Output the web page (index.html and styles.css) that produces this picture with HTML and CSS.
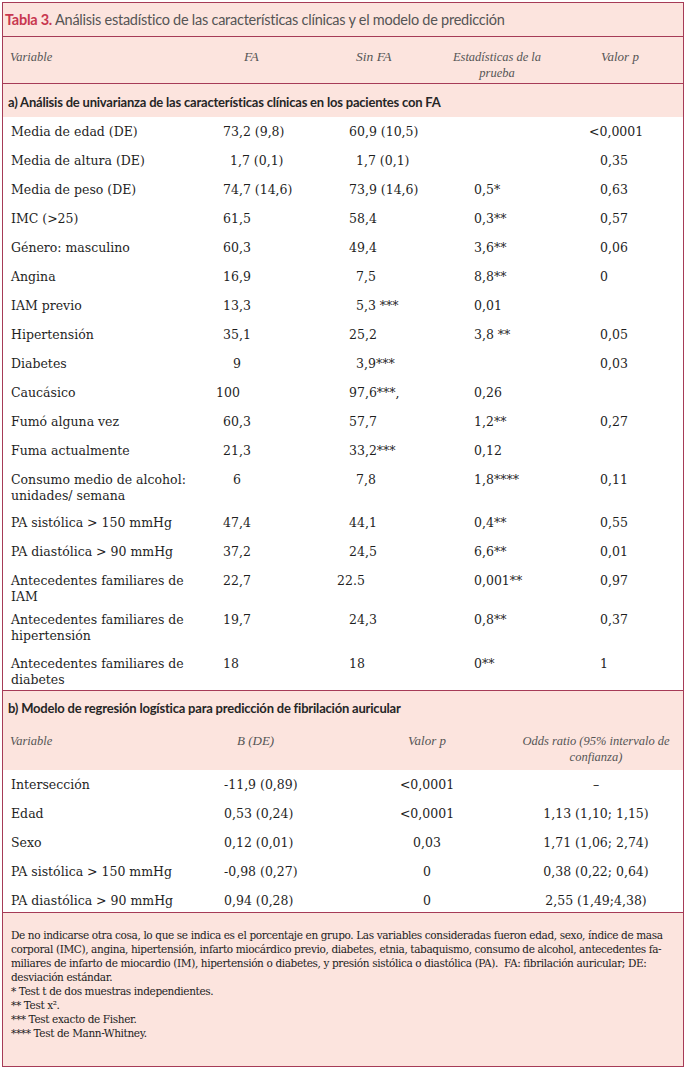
FILE: index.html
```html
<!DOCTYPE html>
<html lang="es">
<head>
<meta charset="utf-8">
<title>Tabla 3</title>
<link rel="stylesheet" href="styles.css">
</head>
<body>
<div class="frame">
  <div class="title"><b>Tabla 3.</b>&nbsp;Análisis estadístico de las características clínicas y el modelo de predicción</div>

  <div class="head-a">
    <div class="c1">Variable</div>
    <div class="c2">FA</div>
    <div class="c3">Sin FA</div>
    <div class="c4">Estadísticas de la prueba</div>
    <div class="c5">Valor p</div>
  </div>
  <div class="sec-title">a) Análisis de univarianza de las características clínicas en los pacientes con FA</div>
  <div class="body-a">
    <div class="row"><div class="v">Media de edad (DE)</div><div>73,2 (9,8)</div><div>60,9 (10,5)</div><div></div><div class="m11">&lt;0,0001</div></div>
    <div class="row"><div class="v">Media de altura (DE)</div><div class="p7">1,7 (0,1)</div><div class="p7">1,7 (0,1)</div><div></div><div>0,35</div></div>
    <div class="row"><div class="v">Media de peso (DE)</div><div>74,7 (14,6)</div><div>73,9 (14,6)</div><div>0,5*</div><div>0,63</div></div>
    <div class="row"><div class="v">IMC (&gt;25)</div><div>61,5</div><div>58,4</div><div>0,3**</div><div>0,57</div></div>
    <div class="row"><div class="v">Género: masculino</div><div>60,3</div><div>49,4</div><div>3,6**</div><div>0,06</div></div>
    <div class="row"><div class="v">Angina</div><div>16,9</div><div class="p7">7,5</div><div>8,8**</div><div>0</div></div>
    <div class="row"><div class="v">IAM previo</div><div>13,3</div><div class="p7">5,3 ***</div><div>0,01</div><div></div></div>
    <div class="row"><div class="v">Hipertensión</div><div>35,1</div><div>25,2</div><div>3,8 **</div><div>0,05</div></div>
    <div class="row"><div class="v">Diabetes</div><div class="p10">9</div><div class="p7">3,9***</div><div></div><div>0,03</div></div>
    <div class="row"><div class="v">Caucásico</div><div class="m7">100</div><div>97,6***,</div><div>0,26</div><div></div></div>
    <div class="row"><div class="v">Fumó alguna vez</div><div>60,3</div><div>57,7</div><div>1,2**</div><div>0,27</div></div>
    <div class="row"><div class="v">Fuma actualmente</div><div>21,3</div><div>33,2***</div><div>0,12</div><div></div></div>
    <div class="row h43"><div class="v">Consumo medio de alcohol:<br>unidades/ semana</div><div class="p10">6</div><div class="p7">7,8</div><div>1,8****</div><div>0,11</div></div>
    <div class="row"><div class="v">PA sistólica &gt; 150 mmHg</div><div>47,4</div><div>44,1</div><div>0,4**</div><div>0,55</div></div>
    <div class="row"><div class="v">PA diastólica &gt; 90 mmHg</div><div>37,2</div><div>24,5</div><div>6,6**</div><div>0,01</div></div>
    <div class="row h39"><div class="v">Antecedentes familiares de<br>IAM</div><div>22,7</div><div class="m12">22.5</div><div>0,001**</div><div>0,97</div></div>
    <div class="row h44"><div class="v">Antecedentes familiares de<br>hipertensión</div><div>19,7</div><div>24,3</div><div>0,8**</div><div>0,37</div></div>
    <div class="row h41"><div class="v">Antecedentes familiares de<br>diabetes</div><div>18</div><div>18</div><div>0**</div><div>1</div></div>
  </div>

  <div class="sec-title sec-b">b) Modelo de regresión logística para predicción de fibrilación auricular</div>
  <div class="head-b">
    <div class="c1">Variable</div>
    <div class="c2">B (DE)</div>
    <div class="c3">Valor p</div>
    <div class="c4">Odds ratio (95% intervalo de confianza)</div>
  </div>
  <div class="body-b">
    <div class="row"><div class="v">Intersección</div><div>-11,9 (0,89)</div><div class="ctr">&lt;0,0001</div><div class="ctr">–</div></div>
    <div class="row"><div class="v">Edad</div><div>0,53 (0,24)</div><div class="ctr">&lt;0,0001</div><div class="ctr">1,13 (1,10; 1,15)</div></div>
    <div class="row"><div class="v">Sexo</div><div>0,12 (0,01)</div><div class="ctr">0,03</div><div class="ctr">1,71 (1,06; 2,74)</div></div>
    <div class="row"><div class="v">PA sistólica &gt; 150 mmHg</div><div>-0,98 (0,27)</div><div class="ctr">0</div><div class="ctr">0,38 (0,22; 0,64)</div></div>
    <div class="row last"><div class="v">PA diastólica &gt; 90 mmHg</div><div>0,94 (0,28)</div><div class="ctr">0</div><div class="ctr">2,55 (1,49;4,38)</div></div>
  </div>

  <div class="notes">
    <p>De no indicarse otra cosa, lo que se indica es el porcentaje en grupo. Las variables consideradas fueron edad, sexo, índice de masa</p>
    <p>corporal (IMC), angina, hipertensión, infarto miocárdico previo, diabetes, etnia, tabaquismo, consumo de alcohol, antecedentes fa-</p>
    <p>miliares de infarto de miocardio (IM), hipertensión o diabetes, y presión sistólica o diastólica (PA).&nbsp; FA: fibrilación auricular; DE:</p>
    <p>desviación estándar.</p>
    <p>* Test t de dos muestras independientes.</p>
    <p>** Test x².</p>
    <p>*** Test exacto de Fisher.</p>
    <p>**** Test de Mann-Whitney.</p>
  </div>
</div>
</body>
</html>
```

FILE: styles.css
```css
* { box-sizing: border-box; }

body {
  margin: 0;
  background: #ffffff;
  font-family: "DejaVu Serif", serif;
  color: #1f1f1f;
}

.frame {
  margin: 2px 0 0 2px;
  width: 682px;
  height: 1065px;
  border: 1px solid #a63b57;
  background: #fce4de;
  display: flex;
  flex-direction: column;
}

.title {
  height: 34px;
  flex: none;
  border-bottom: 1px solid #a63b57;
  padding-left: 2px;
  display: flex;
  align-items: center;
  font-family: Lato, "Open Sans", sans-serif;
  font-size: 14.5px;
  letter-spacing: -0.25px;
  color: #555555;
  white-space: nowrap;
}

.title b {
  color: #c8374f;
  font-weight: 700;
}

/* ---- headers (italic) ---- */
.head-a,
.head-b {
  display: grid;
  flex: none;
  font-family: "Liberation Serif", serif;
  font-style: italic;
  font-size: 12.5px;
  line-height: 16px;
  color: #555555;
}

.head-a {
  height: 47px;
  padding-top: 12px;
  border-bottom: 1px solid #a63b57;
  grid-template-columns: 241px 112px 88px 106px 1fr;
}

.head-a .c1 { padding-left: 7px; }
.head-a .c2,
.head-a .c3 { font-size: 13.5px; }
.head-a .c4 { text-align: center; padding: 0 6px; }
.head-a .c5 { padding-left: 51px; font-size: 13px; }

.head-b {
  height: 45px;
  padding-top: 8px;
  grid-template-columns: 221px 116px 174px 164px 1fr;
}

.head-b .c1 { padding-left: 7px; }
.head-b .c2 { padding-left: 13px; font-size: 13px; }
.head-b .c3 { text-align: center; font-size: 13px; }
.head-b .c4 { text-align: center; }

/* ---- section titles ---- */
.sec-title {
  flex: none;
  height: 33px;
  padding: 10px 0 0 5px;
  font-family: Lato, "Open Sans", sans-serif;
  font-weight: 700;
  font-size: 13px;
  letter-spacing: -0.2px;
  line-height: 16px;
  color: #262626;
  white-space: nowrap;
}

.sec-b {
  height: 34px;
  padding-top: 9px;
}

/* ---- body rows ---- */
.body-a,
.body-b {
  flex: none;
  background: #ffffff;
  border-bottom: 1px solid #a63b57;
  font-size: 12.5px;
  line-height: 16px;
}

.row {
  display: grid;
  height: 29px;
  padding-top: 7px;
}

.body-a .row {
  grid-template-columns: 220px 126px 125px 126px 1fr;
}

.body-b .row {
  grid-template-columns: 221px 116px 174px 164px 1fr;
}

.row .v { padding-left: 8px; }

.row.h43 { height: 43px; }
.row.h39 { height: 39px; }
.row.h44 { height: 44px; }
.row.h41 { height: 41px; }
.row.last { height: 26px; }

.p7 { padding-left: 7px; }
.p10 { padding-left: 10px; }
.m7 { margin-left: -7px; }
.m11 { margin-left: -11px; }
.m12 { margin-left: -12px; }
.ctr { text-align: center; }

/* ---- notes ---- */
.notes {
  padding: 15px 0 0 8px;
  font-size: 10.5px;
  letter-spacing: -0.37px;
  line-height: 14px;
  color: #222222;
}

.notes p {
  margin: 0;
  white-space: nowrap;
}
```
